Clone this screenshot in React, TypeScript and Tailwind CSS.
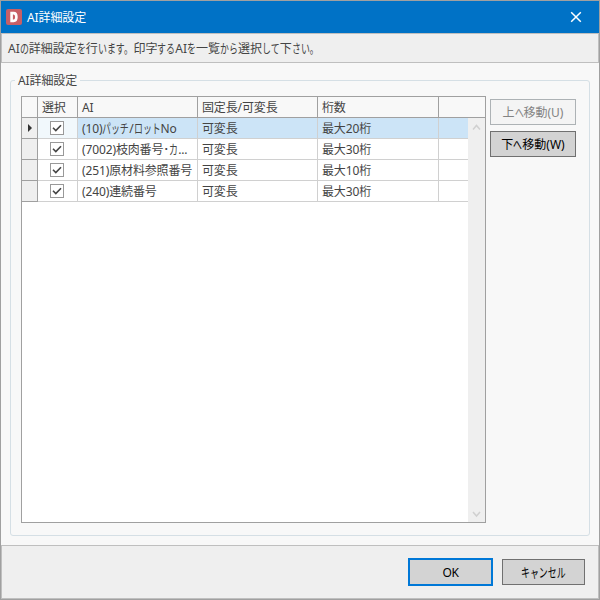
import { useState } from "react";

const columns = ["選択", "AI", "固定長/可変長", "桁数", ""];

const initialRows = [
  { id: 1, name: "(10)パッチ/ロットNo", kind: "可変長", digits: "最大20桁", checked: true },
  { id: 2, name: "(7002)枝肉番号･カ...", kind: "可変長", digits: "最大30桁", checked: true },
  { id: 3, name: "(251)原材料参照番号", kind: "可変長", digits: "最大10桁", checked: true },
  { id: 4, name: "(240)連続番号", kind: "可変長", digits: "最大30桁", checked: true },
];

// Kana is set narrower than kanji, as in the Windows UI fonts
function Label({ text }: { text: string }) {
  const runs = text.split(/([ぁ-んァ-ヶ。]+)/);
  return (
    <span className="whitespace-nowrap">
      {runs.map((run, i) =>
        i % 2 === 1 ? (
          <span key={i} className="inline-block leading-3" style={{ width: `${run.length * 0.745}em` }}>
            <span className="inline-block origin-left scale-x-[0.687] text-[13px] leading-3 tracking-normal">{run}</span>
          </span>
        ) : (
          <span key={i}>{run}</span>
        )
      )}
    </span>
  );
}

function CheckBox({ checked, onChange }: { checked: boolean; onChange: () => void }) {
  return (
    <button
      role="checkbox"
      aria-checked={checked}
      onClick={onChange}
      className="flex h-3.5 w-3.5 items-center justify-center border border-[#999] bg-white"
    >
      {checked && (
        <svg width="10" height="10" viewBox="0 0 10 10" fill="none" stroke="#444" strokeWidth="1.6">
          <path d="M1 4.8 3.8 7.6 9 2.2" />
        </svg>
      )}
    </button>
  );
}

export default function App() {
  const [rows, setRows] = useState(initialRows);
  const [current, setCurrent] = useState(0);

  const toggle = (id: number) => {
    setRows(rows.map((r) => (r.id === id ? { ...r, checked: !r.checked } : r)));
  };

  const move = (step: number) => {
    const target = current + step;
    if (target < 0 || target >= rows.length) return;
    const next = [...rows];
    [next[current], next[target]] = [next[target], next[current]];
    setRows(next);
    setCurrent(target);
  };

  return (
    <div className="flex h-[600px] w-[600px] flex-col border border-[#a0a0a0] bg-[#f8f8f8] font-['Noto_Sans','Noto_Sans_CJK_JP',sans-serif] text-[12px] leading-4 text-[#444]">
      <header className="flex h-8 shrink-0 items-center bg-[#0072c6] pl-[5px] text-white">
        <svg width="16" height="16" viewBox="0 0 16 16">
          <rect width="16" height="16" rx="2" fill="#c75f66" />
          <path d="M5.6 4.1h2c1.9 0 2.8 1.3 2.8 3.9s-.9 3.9-2.8 3.9h-2z" fill="none" stroke="#fff" strokeWidth="2.6" />
        </svg>
        <h1 className="ml-[5px] pt-px tracking-[-0.1px]"><Label text="AI詳細設定" /></h1>
        <button className="mr-[17px] ml-auto" aria-label="閉じる">
          <svg width="12" height="12" viewBox="0 0 12 12" stroke="#fff" strokeWidth="1.5">
            <path d="M1.2 1.2 10.8 10.8M10.8 1.2 1.2 10.8" />
          </svg>
        </button>
      </header>

      <p className="h-[30px] shrink-0 border border-[#bfbfbf] bg-[#efefef] pt-[7px] pl-1.5">
        <Label text="AIの詳細設定を行います。印字するAIを一覧から選択して下さい。" />
      </p>

      <main className="flex grow flex-col px-[9px] pt-[9px] pb-[9px]">
        <fieldset className="flex grow flex-col rounded-[3px] border border-[#d5dfe5] pl-2.5">
          <legend className="ml-[-6px] h-4 px-[3px] pt-px tracking-[-0.1px]"><Label text="AI詳細設定" /></legend>
          <div className="mt-[8px] flex items-start">
            <div className="flex h-[427px] w-[465px] flex-col border border-[#a0a0a0] bg-white tracking-[-0.13px]">
              <div className="grid h-[21px] shrink-0 grid-cols-[16px_40px_120px_120px_121px_1fr] border-b border-[#a0a0a0] bg-[#f8f8f8]">
                <div className="border-r border-[#a0a0a0]" />
                {columns.map((c, i) => (
                  <div key={i} className="border-r border-[#a0a0a0] pt-[3px] pl-1 last:border-r-0">
                    <Label text={c} />
                  </div>
                ))}
              </div>
              <div className="flex grow">
                <div className="w-[446px]">
                  {rows.map((row, i) => (
                    <div
                      key={row.id}
                      onClick={() => setCurrent(i)}
                      className={`grid h-[21px] grid-cols-[16px_40px_120px_120px_121px_1fr] *:border-b *:border-[#d0d0d0] ${
                        i === current ? "bg-[#cce4f7]" : "bg-white"
                      }`}
                    >
                      <div className="flex items-center justify-center border-r border-b-[#a0a0a0]! border-r-[#a0a0a0]! bg-[#efefef] pl-px">
                        {i === current && (
                          <svg width="4" height="8" viewBox="0 0 4 8" fill="#333">
                            <path d="M0 0 4 4 0 8z" />
                          </svg>
                        )}
                      </div>
                      <div
                        className={`flex items-center border-r pl-3 ${
                          i === current ? "bg-[#f1f8fc]" : "bg-white"
                        }`}
                      >
                        <CheckBox checked={row.checked} onChange={() => toggle(row.id)} />
                      </div>
                      <div className="border-r pt-[3px] pl-1"><Label text={row.name} /></div>
                      <div className="border-r pt-[3px] pl-1"><Label text={row.kind} /></div>
                      <div className="border-r pt-[3px] pl-1"><Label text={row.digits} /></div>
                      <div />
                    </div>
                  ))}
                </div>
                <div className="flex grow flex-col items-center justify-between bg-[#efefef] pt-[6px] pb-[4px]">
                  <svg width="9" height="7" viewBox="0 0 9 7" fill="none" stroke="#d0d0d0" strokeWidth="1.5">
                    <path d="M1 5.5 4.5 1.5 8 5.5" />
                  </svg>
                  <svg width="9" height="7" viewBox="0 0 9 7" fill="none" stroke="#d0d0d0" strokeWidth="1.5">
                    <path d="M1 1 4.5 5 8 1" />
                  </svg>
                </div>
              </div>
            </div>

            <div className="mt-[3px] ml-1 flex w-[86px] flex-col gap-1.5">
              <button
                disabled={current === 0}
                onClick={() => move(-1)}
                className="h-[26px] border border-[#707070] bg-[#d3d3d3] pt-0.5 text-black disabled:border-[#adb2b5] disabled:bg-[#f4f4f4] disabled:text-[#838383]"
              >
                <Label text="上へ移動(U)" />
              </button>
              <button
                disabled={current === rows.length - 1}
                onClick={() => move(1)}
                className="h-[26px] border border-[#707070] bg-[#d3d3d3] pt-0.5 text-black disabled:border-[#adb2b5] disabled:bg-[#f4f4f4] disabled:text-[#838383]"
              >
                <Label text="下へ移動(W)" />
              </button>
            </div>
          </div>
        </fieldset>
      </main>

      <footer className="flex h-[54px] shrink-0 items-center justify-end gap-[9px] border border-[#bfbfbf] bg-[#efefef] pr-[13px] text-black">
        <button className="h-7 w-[85px] border-2 border-[#0078d7] bg-[#d3d3d3] pt-0.5 tracking-[-0.5px]">OK</button>
        <button className="h-[26px] w-[83px] border border-[#707070] bg-[#d3d3d3] pt-0.5">
          <Label text="キャンセル" />
        </button>
      </footer>
    </div>
  );
}
